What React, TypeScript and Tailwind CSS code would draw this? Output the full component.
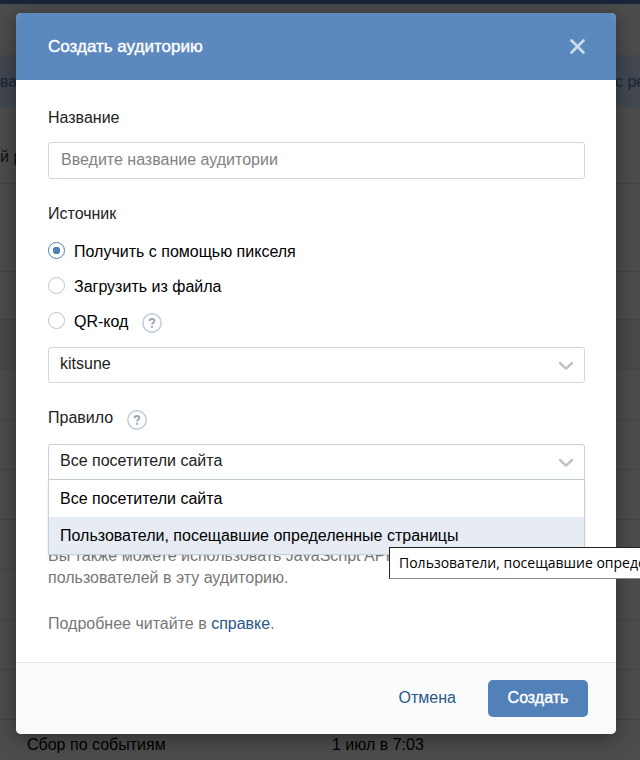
import { useState } from 'react'
import clsx from 'clsx'

const SOURCES = [
  { id: 'pixel', label: 'Получить с помощью пикселя' },
  { id: 'file', label: 'Загрузить из файла' },
  { id: 'qr', label: 'QR-код', help: true },
]

const RULES = ['Все посетители сайта', 'Пользователи, посещавшие определенные страницы']

const EMPTY_ROWS = ['h-[88px]', 'h-12', 'h-[50px] bg-[#494949]', 'h-[50px]', 'h-[50px]', 'h-[50px]', 'h-[50px]', 'h-[50px]', 'h-[50px]', 'h-[50px]']

function HelpButton({ label }: { label: string }) {
  return (
    <button type="button" aria-label={label} className="mt-0.5 h-5 w-5 shrink-0">
      <svg viewBox="0 0 20 20" className="h-5 w-5" fill="none">
        <circle cx="10" cy="10" r="9.2" stroke="#bcc9d8" strokeWidth="1.4" />
        <path d="M7.6 8.3c0-1.5 1-2.3 2.4-2.3s2.4.8 2.4 2c0 1.7-2.4 1.7-2.4 3.5" stroke="#99a3b1" strokeWidth="1.8" />
        <circle cx="10" cy="13.9" r="1.1" fill="#99a3b1" />
      </svg>
    </button>
  )
}

function Chevron() {
  return (
    <svg viewBox="0 0 14 8" className="pointer-events-none absolute right-3 top-[15px] h-2 w-3.5" fill="none">
      <path d="M1 1l6 5.6L13 1" stroke="#bdc1c7" strokeWidth="2.4" strokeLinecap="round" strokeLinejoin="round" />
    </svg>
  )
}

function AudienceTable() {
  return (
    <div className="absolute inset-0 overflow-hidden bg-[#4c4c4c]">
      <div className="h-1 bg-[#182439]" />
      <table className="mt-[51px] w-full table-fixed text-left">
        <thead>
          <tr className="h-[52px] bg-[#424750] text-[#1b2634]">
            <th className="w-[332px] pt-0.5 font-normal">ва</th>
            <th className="w-[283px]" />
            <th className="whitespace-nowrap pt-0.5 font-normal">с ре</th>
          </tr>
        </thead>
        <tbody>
          <tr className="h-[76px] border-b border-[#444444] text-[#111111]">
            <td className="pt-10 align-top">й р</td>
            <td />
            <td />
          </tr>
          {EMPTY_ROWS.map((row, i) => (
            <tr key={i} className={clsx('border-b border-[#444444]', row)}>
              <td colSpan={3} />
            </tr>
          ))}
          <tr className="h-[52px]">
            <td className="pl-[27px]">Сбор по событиям</td>
            <td>1 июл в 7:03</td>
            <td />
          </tr>
        </tbody>
      </table>
    </div>
  )
}

export default function App() {
  const [source, setSource] = useState('pixel')
  const [rule, setRule] = useState(RULES[0])

  return (
    <div className="relative min-h-screen overflow-hidden pb-[26px] pl-4 pr-6 pt-[13px] font-['Liberation_Sans',Arial,sans-serif] text-base leading-5 text-black">
      <AudienceTable />

      <div role="dialog" aria-labelledby="title" className="relative rounded-[5px] bg-white shadow-[0_4px_20px_rgba(0,0,0,0.4)]">
        <header className="flex h-[67px] items-center justify-between rounded-t-[5px] bg-[#5b88bd] pl-8 pr-[31px] text-white">
          <h1 id="title" className="text-[17px] [-webkit-text-stroke:0.4px_white]">Создать аудиторию</h1>
          <button type="button" aria-label="Закрыть" className="h-4 w-4">
            <svg viewBox="0 0 16 16" className="h-4 w-4" fill="none">
              <path d="M2.5 1.5l12 12M14.5 1.5l-12 12" stroke="#cfdceb" strokeWidth="2.6" strokeLinecap="round" />
            </svg>
          </button>
        </header>

        <form id="audience" className="pb-[27px] pl-8 pr-[31px] pt-7 text-[#222222]">
          <label htmlFor="name" className="block">Название</label>
          <input
            id="name"
            type="text"
            placeholder="Введите название аудитории"
            className="mt-3.5 block h-[37px] w-full rounded-[3px] border border-[#d0d7e0] px-3 pb-0.5 placeholder:text-[#828282] focus:outline-none"
          />

          <fieldset className="mt-[25px]">
            <legend className="mb-[17px]">Источник</legend>
            <div className="flex flex-col gap-[15px] text-black">
              {SOURCES.map((item) => (
                <div key={item.id} className="flex h-5 gap-3.5">
                  <label className="flex gap-[9px] leading-[22px]">
                    <input
                      type="radio"
                      name="source"
                      checked={source === item.id}
                      onChange={() => setSource(item.id)}
                      className="mt-px h-[17px] w-[17px] shrink-0 appearance-none rounded-full border border-[#b9c3d0] checked:border-[#5181b8] checked:bg-[radial-gradient(circle,#5181b8_3.5px,transparent_4px)]"
                    />
                    {item.label}
                  </label>
                  {item.help && <HelpButton label="Что такое QR-код" />}
                </div>
              ))}
            </div>
          </fieldset>

          <div className="relative mt-4">
            <select aria-label="Пиксель" className="block h-9 w-full appearance-none rounded-[3px] border border-[#d0d7e0] bg-white pb-0.5 pl-[11px] pr-10">
              <option>kitsune</option>
            </select>
            <Chevron />
          </div>

          <div className="mt-[25px] flex h-5 gap-3.5">
            <label htmlFor="rule">Правило</label>
            <HelpButton label="Что такое правило" />
          </div>
          <div className="relative mt-4">
            <select
              id="rule"
              value={rule}
              onChange={(e) => setRule(e.target.value)}
              className="block h-9 w-full appearance-none rounded-t-[3px] border border-[#c5d0db] bg-white pb-0.5 pl-[11px] pr-10"
            >
              {RULES.map((item) => (
                <option key={item}>{item}</option>
              ))}
            </select>
            <Chevron />
            <ul role="listbox" aria-label="Правило" className="absolute inset-x-0 top-full z-10 border border-t-0 border-[#c5d0db] bg-white text-black shadow-[0_1px_3px_rgba(0,0,0,0.1)]">
              {RULES.map((item, i) => (
                <li
                  key={item}
                  role="option"
                  aria-selected={item === rule}
                  onClick={() => setRule(item)}
                  className={clsx('cursor-pointer px-[11px] leading-[37px]', i === 1 && 'bg-[#e7ebf3]')}
                >
                  {item}
                </li>
              ))}
            </ul>
            <div role="tooltip" className="absolute left-[341px] top-[103px] z-20 h-8 whitespace-nowrap border border-[#222222] border-b-[#888888] bg-white px-[9px] font-['Open_Sans','Noto_Sans',sans-serif] text-sm leading-[30px] text-black">
              {RULES[1]}
            </div>
          </div>

          <div className="mt-[65px] leading-[22px] text-[#777777]">
            <p>
              Вы также можете использовать JavaScript API
              <br />
              пользователей в эту аудиторию.
            </p>
            <p className="mt-6">
              Подробнее читайте в <a href="#help" className="text-[#2a5885]">справке</a>.
            </p>
          </div>
        </form>

        <footer className="flex justify-end gap-8 rounded-b-[5px] border-t border-[#e4e6ec] bg-[#fafbfd] py-[17px] pr-7">
          <button type="button" className="pb-0.5 text-[#2a5885]">Отмена</button>
          <button type="submit" form="audience" className="h-[37px] w-[100px] rounded-[5px] bg-[#5181b8] pb-0.5 text-white [-webkit-text-stroke:0.4px_white]">
            Создать
          </button>
        </footer>
      </div>
    </div>
  )
}
